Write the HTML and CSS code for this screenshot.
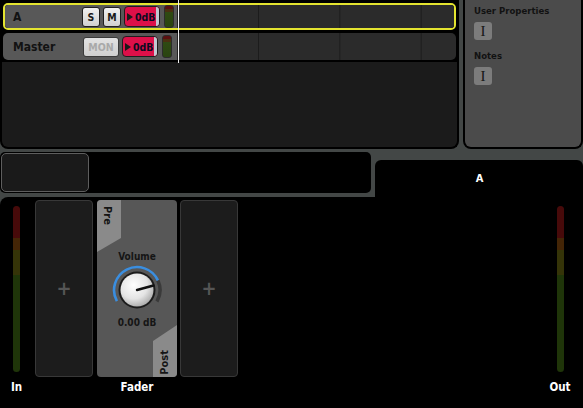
FILE: index.html
```
<!DOCTYPE html>
<html>
<head>
<meta charset="utf-8">
<link rel="stylesheet" href="styles.css">
</head>
<body>
<div class="app">
  <div class="top">
    <div class="tracks-panel">
      <div class="rows">
        <div class="track selected">
          <div class="head">
            <span class="name">A</span>
            <span class="btn sm">S</span>
            <span class="btn sm">M</span>
            <span class="vol"><span class="tri"></span><span class="voltext">0dB</span><span class="volend"></span></span>
            <span class="tmeter"></span>
          </div>
          <div class="lane"></div>
        </div>
        <div class="track master">
          <div class="head">
            <span class="name">Master</span>
            <span class="btn mon">MON</span>
            <span class="vol"><span class="tri"></span><span class="voltext">0dB</span><span class="volend"></span></span>
            <span class="tmeter"></span>
          </div>
          <div class="lane"></div>
        </div>
        <div class="playhead"></div>
      </div>
    </div>
    <div class="props-panel">
      <div class="prop-title">User Properties</div>
      <div class="ibtn">I</div>
      <div class="prop-title notes">Notes</div>
      <div class="ibtn">I</div>
    </div>
  </div>
  <div class="middle">
    <div class="mbox"><div class="mbox-inner"></div></div>
    <div class="tab">A</div>
  </div>
  <div class="strip">
    <div class="io in">
      <div class="meter"></div>
      <div class="label">In</div>
    </div>
    <div class="col slot-col">
      <div class="slot"><span class="plus">+</span></div>
    </div>
    <div class="col fader-col">
      <div class="fader">
        <div class="pre"><span>Pre</span></div>
        <div class="post"><span>Post</span></div>
        <div class="vol-title">Volume</div>
        <svg class="knob" width="52" height="52" viewBox="0 0 52 52">
          <defs>
            <radialGradient id="kg" cx="0.4" cy="0.35" r="0.7">
              <stop offset="0" stop-color="#ffffff"/>
              <stop offset="0.6" stop-color="#e4e4e4"/>
              <stop offset="1" stop-color="#a8a8a8"/>
            </radialGradient>
          </defs>
          <path d="M46.9 16.4 A23 23 0 0 1 45.9 37.5" fill="none" stroke="#3a3a3a" stroke-width="3.5"/>
          <path d="M5.9 37.2 A23 23 0 1 1 46.9 16.4" fill="none" stroke="#3a8ee0" stroke-width="2.6"/>
          <circle cx="26" cy="26" r="18.5" fill="#1c1c1c"/>
          <circle cx="26" cy="26" r="16.5" fill="url(#kg)"/>
          <line x1="26" y1="26" x2="42.5" y2="21.5" stroke="#111" stroke-width="2.4" stroke-linecap="round"/>
        </svg>
        <div class="vol-val">0.00 dB</div>
      </div>
      <div class="label">Fader</div>
    </div>
    <div class="col slot-col s3">
      <div class="slot"><span class="plus">+</span></div>
    </div>
    <div class="io out">
      <div class="meter"></div>
      <div class="label">Out</div>
    </div>
  </div>
</div>
</body>
</html>
```
FILE: styles.css
```
* { box-sizing: border-box; }
html, body { margin: 0; padding: 0; }
body {
  width: 583px;
  height: 408px;
  overflow: hidden;
  background: #434746;
  font-family: "DejaVu Sans Condensed", "DejaVu Sans", sans-serif;
  font-stretch: condensed;
  font-weight: bold;
}
.app { display: flex; flex-direction: column; height: 408px; }

.top { display: flex; height: 149px; gap: 4px; }
.tracks-panel {
  width: 459px;
  background: #1b1b1b;
  border: 2px solid #000;
  border-top: none;
  border-radius: 0 0 8px 8px;
}
.rows {
  position: relative;
  background: #000;
  padding: 3px 1px 2px 1px;
  display: flex;
  flex-direction: column;
  gap: 3px;
}
.track {
  display: flex;
  height: 27px;
  border-radius: 5px;
  overflow: hidden;
}
.track.selected { border: 2px solid #e4e430; }
.head {
  width: 172px;
  background: #585858;
  display: flex;
  align-items: center;
  padding-left: 8px;
}
.track.master .head { width: 174px; padding-left: 10px; padding-right: 2px; }
.name { font-size: 12px; color: #121212; flex: 1; }
.btn {
  height: 20px;
  border-radius: 3px;
  display: flex;
  align-items: center;
  justify-content: center;
  font-size: 10.5px;
}
.btn.sm {
  width: 18px;
  margin-right: 3px;
  background: linear-gradient(#f0f0f0, #d0d0d0);
  border: 1.5px solid #1e1e1e;
  color: #1a1a1a;
}
.btn.mon {
  width: 36px;
  margin-right: 3px;
  background: linear-gradient(#e2e2e2, #cfcfcf);
  border: 1.5px solid #3a3a3a;
  color: #a9a9a9;
}
.vol {
  width: 36px;
  height: 21px;
  border: 1.5px solid #1e1e1e;
  border-radius: 4px;
  background: #dd1049;
  display: flex;
  align-items: center;
  overflow: hidden;
  margin-right: 4px;
}
.tri {
  width: 0; height: 0;
  border-top: 4px solid transparent;
  border-bottom: 4px solid transparent;
  border-left: 6px solid #1a1a1a;
  margin-left: 2px;
}
.voltext { font-size: 10.5px; color: #0a0a20; margin-left: 2px; }
.volend { margin-left: auto; width: 5px; height: 100%; background: #c3c8d2; }
.tmeter {
  width: 10px;
  height: 23px;
  border: 1.5px solid #2c2c2c;
  border-radius: 3px;
  background: linear-gradient(#5a1010 0, #5a1010 3px, #4a3010 3px, #4a3010 6px, #2f4a12 6px, #2a4410 100%);
  margin-right: 3px;
}
.lane {
  flex: 1;
  background-color: #2b2b2b;
  background-image: linear-gradient(to right, #1c1c1c 1px, transparent 1px);
  background-size: 81.33px 100%;
  background-position: 81px 0;
}
.playhead {
  position: absolute;
  left: 176px;
  top: 0;
  width: 1px;
  height: 63px;
  background: #f0f0f0;
}

.props-panel {
  flex: 1;
  background: #4b4b4b;
  border: 2px solid #000;
  border-top: none;
  border-radius: 0 0 8px 8px;
  padding: 5px 0 0 9px;
}
.prop-title { font-size: 9.5px; color: #121212; line-height: 12px; }
.prop-title.notes { margin-top: 10px; }
.ibtn {
  width: 18px;
  height: 18px;
  margin-top: 5px;
  border-radius: 3px;
  background: #7c7c7c;
  color: #151515;
  font-family: "Liberation Serif", serif;
  font-weight: normal;
  font-size: 15px;
  line-height: 18px;
  text-align: center;
}

.middle {
  display: flex;
  align-items: flex-end;
  height: 48px;
}
.mbox {
  width: 371px;
  height: 41px;
  margin-bottom: 4px;
  background: #000;
  border-radius: 5px;
  padding: 1px;
}
.mbox-inner {
  width: 88px;
  height: 39px;
  background: #1a1a1a;
  border: 1px solid #5e5e5e;
  border-radius: 5px;
}
.tab {
  margin-left: 4px;
  flex: 1;
  height: 37px;
  background: #000;
  border-radius: 6px 6px 0 0;
  color: #fff;
  font-size: 11px;
  text-align: center;
  line-height: 38px;
  padding-left: 1px;
}

.strip {
  flex: 1;
  background: #000;
  border-radius: 8px 0 0 0;
  display: flex;
  padding: 3px 12px 0 10px;
}
.io { display: flex; flex-direction: column; align-items: center; }
.io.in { width: 13px; }
.io.out { width: 22px; margin-left: auto; }
.meter {
  margin-top: 6px;
  width: 7px;
  height: 166px;
  border-radius: 4px;
  background: linear-gradient(#470a0a 0, #470a0a 32px, #442506 32px, #442506 44px, #353408 44px, #353408 69px, #1f3509 69px, #1f3509 100%);
}
.label {
  color: #fff;
  font-size: 11.5px;
  line-height: 13px;
  margin-top: 9px;
}
.col { display: flex; flex-direction: column; align-items: center; }
.slot-col { margin-left: 12px; }
.slot-col.s3 { margin-left: 3px; }
.slot {
  width: 58px;
  height: 177px;
  background: #1c1c1c;
  border: 1.5px solid #383838;
  border-radius: 4px;
  display: flex;
  align-items: center;
  justify-content: center;
}
.plus {
  color: #555;
  font-family: "DejaVu Sans", sans-serif;
  font-size: 20px;
  font-weight: bold;
  margin-top: -1px;
}
.fader-col { margin-left: 4px; }
.fader-col .label { margin-top: 4px; }
.fader {
  position: relative;
  width: 80px;
  height: 177px;
  background: #575757;
  border-radius: 4px;
  overflow: hidden;
  display: flex;
  flex-direction: column;
  align-items: center;
}
.pre, .post {
  position: absolute;
  background: #8a8a8a;
}
.pre {
  left: 0; top: 0; width: 24px; height: 52px;
  clip-path: polygon(0 0, 24px 0, 24px 38px, 0 52px);
}
.post {
  right: 0; bottom: 0; width: 24px; height: 52px;
  clip-path: polygon(0 16px, 24px 0, 24px 52px, 0 52px);
}
.pre span, .post span {
  position: absolute;
  font-size: 11px;
  color: #151515;
  white-space: nowrap;
}
.pre span {
  writing-mode: vertical-rl;
  left: 4px;
  top: 6px;
}
.post span {
  writing-mode: vertical-rl;
  transform: rotate(180deg);
  left: 5px;
  bottom: 2px;
}
.vol-title {
  margin-top: 51px;
  font-size: 10px;
  color: #151515;
  position: relative;
}
.knob { display: block; margin-top: 2px; }
.vol-val {
  margin-top: 1px;
  font-size: 10px;
  color: #151515;
}
```
